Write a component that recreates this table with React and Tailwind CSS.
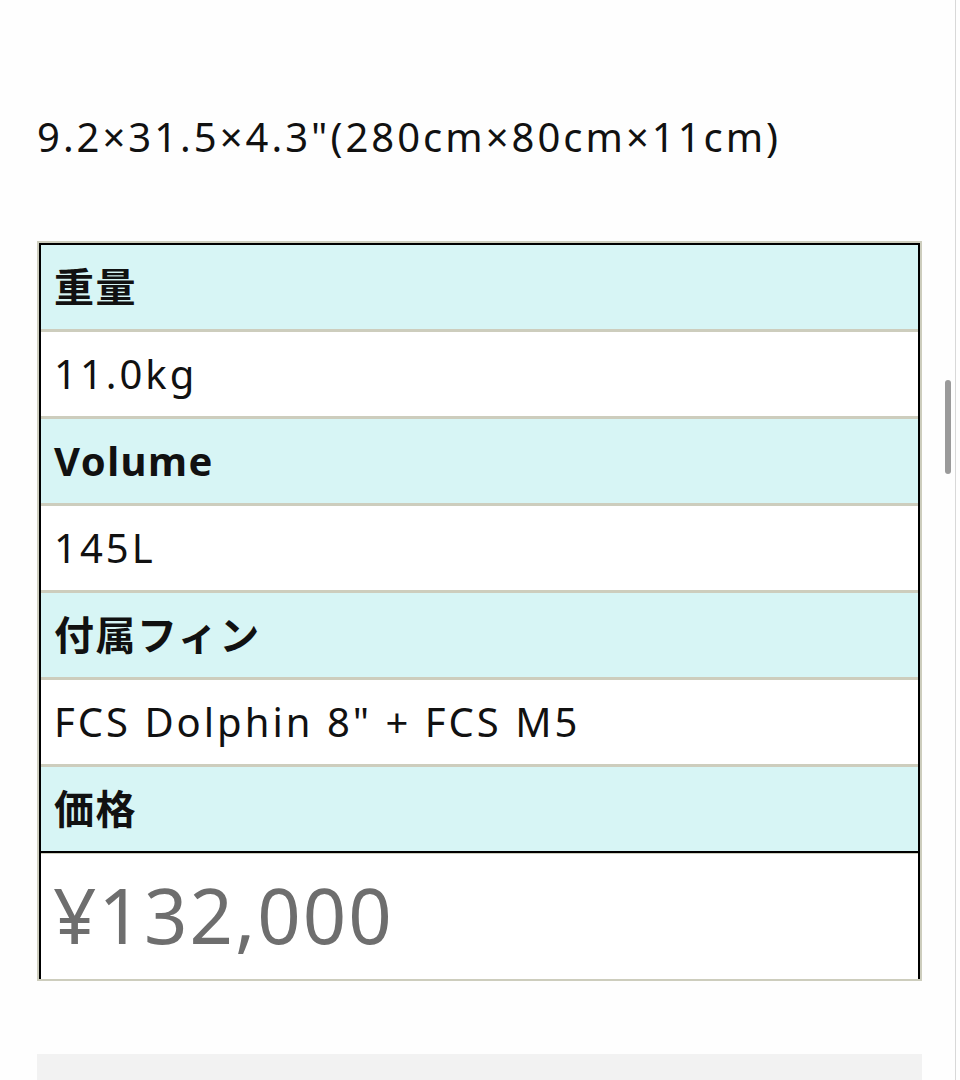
const rows = [
  { label: '重量', value: '11.0kg' },
  { label: 'Volume', value: '145L' },
  { label: '付属フィン', value: 'FCS Dolphin 8" + FCS M5' },
]

const font = { fontFamily: '"Noto Sans", "Noto Sans CJK JP", sans-serif' }

export default function App() {
  return (
    <div className="relative min-h-[1080px] bg-[#fefefe] text-[#111]" style={font}>
      <div className="w-[956px] border-r border-[#d8d8d8] min-h-[1080px] pt-[104px]">
        <p className="ml-[37px] text-[40px] leading-[66px] tracking-[3px]">
          9.2×31.5×4.3"(280cm×80cm×11cm)
        </p>

        <div className="mt-[71px] ml-[37px] w-[885px] border-2 border-[#cdcdbd]">
          <div className="border-x-2 border-t-2 border-black">
            {rows.map((r) => (
              <div key={r.label}>
                <div className="h-[84px] flex items-center px-[13px] bg-[#d7f5f5] text-[40px] font-bold tracking-[1.5px]">{r.label}</div>
                <div className="h-[3px] bg-[#cdcdbd]" />
                <div className="h-[84px] flex items-center px-[13px] bg-white text-[40px] tracking-[3px]">{r.value}</div>
                <div className="h-[3px] bg-[#cdcdbd]" />
              </div>
            ))}
            <div className="h-[84px] flex items-center px-[13px] bg-[#d7f5f5] text-[40px] font-bold tracking-[1.5px]">価格</div>
            <div className="h-[2px] bg-black" />
            <div className="h-[1px] bg-[#cdcdbd]" />
            <div className="h-[125px] flex items-center px-[12px] pb-[4px] bg-white text-[76px] tracking-[2px] text-[#6e6e6e]">¥132,000</div>
          </div>
        </div>

        <div className="mt-[73px] ml-[37px] w-[885px] h-[40px] bg-[#f2f2f2]" />
      </div>

      <div className="absolute left-[945px] top-[380px] w-[6px] h-[94px] rounded-full bg-[#9a9a9a]" />
    </div>
  )
}
